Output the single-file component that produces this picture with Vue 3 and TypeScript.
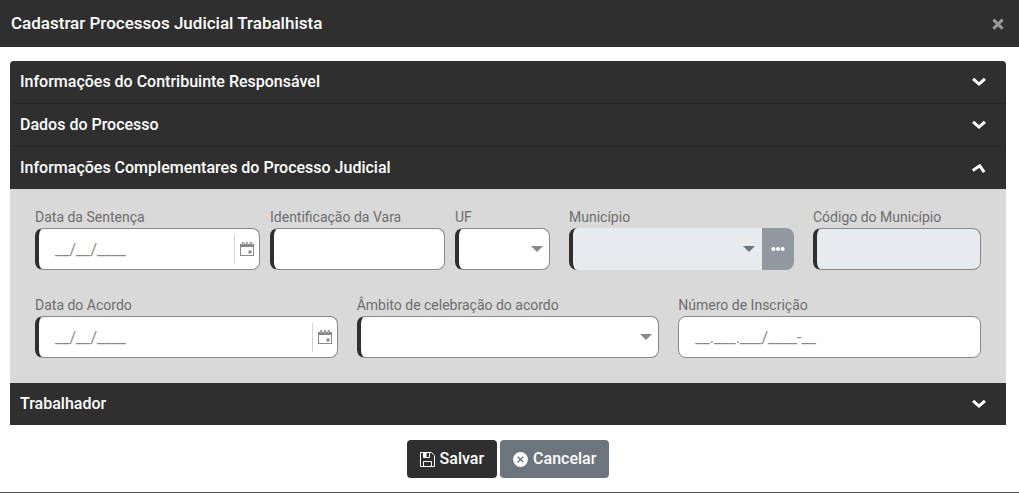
<script setup lang="ts">
import { reactive, ref } from 'vue'

type SectionKey = 'contribuinte' | 'processo' | 'complementares' | 'trabalhador'

interface Section {
  key: SectionKey
  title: string
}

const sections: Section[] = [
  { key: 'contribuinte', title: 'Informações do Contribuinte Responsável' },
  { key: 'processo', title: 'Dados do Processo' },
  { key: 'complementares', title: 'Informações Complementares do Processo Judicial' },
  { key: 'trabalhador', title: 'Trabalhador' },
]

const openSection = ref<SectionKey | null>('complementares')

const form = reactive({
  dataSentenca: '',
  vara: '',
  uf: '',
  municipio: '',
  codigoMunicipio: '',
  dataAcordo: '',
  ambito: '',
  inscricao: '',
})

function toggle(key: SectionKey): void {
  openSection.value = openSection.value === key ? null : key
}
</script>

<template>
  <form class="dialog" @submit.prevent>
    <header class="dialog-header">
      <h1>Cadastrar Processos Judicial Trabalhista</h1>
      <button class="close" type="button" aria-label="Fechar">
        <svg viewBox="0 0 12 12" width="12" height="12" aria-hidden="true">
          <path d="M1.4 1.6 10.6 10.8M10.6 1.6 1.4 10.8" />
        </svg>
      </button>
    </header>

    <main class="accordion">
      <section v-for="section in sections" :key="section.key" class="section">
        <h2>
          <button
            class="section-toggle"
            type="button"
            :aria-expanded="openSection === section.key"
            @click="toggle(section.key)"
          >
            <span>{{ section.title }}</span>
            <svg v-if="openSection === section.key" viewBox="0 0 16 16" width="16" height="16" aria-hidden="true">
              <path d="M1.8 10.6 8.7 5.8 13.2 12.2" />
            </svg>
            <svg v-else viewBox="0 0 16 16" width="16" height="16" aria-hidden="true">
              <path d="M2.1 4.8 8 10.1 13.9 4.8" />
            </svg>
          </button>
        </h2>

        <div v-if="section.key === 'complementares' && openSection === section.key" class="panel">
          <div class="row row-court">
            <div class="group">
              <div class="field">
                <label for="data-sentenca">Data da Sentença</label>
                <div class="control required">
                  <input id="data-sentenca" v-model="form.dataSentenca" type="text" placeholder="__/__/____" />
                  <button class="calendar" type="button" aria-label="Abrir calendário">
                    <svg viewBox="0 0 14 14" width="14" height="14" aria-hidden="true">
                      <path class="fill" d="M0 2H2V1Q2 0 3.2 0T4.4 1V2H5.8V1Q5.8 0 7 0T8.2 1V2H9.6V1Q9.6 0 10.8 0T12 1V2H14V14H0ZM1 5V13H13V5Z" fill-rule="evenodd" />
                      <path class="hole" d="M2.8 1.2H3.6V2.4H2.8ZM6.6 1.2H7.4V2.4H6.6ZM10.4 1.2H11.2V2.4H10.4Z" />
                      <path class="fill" d="M8.5 8.5H11.5V11.5H8.5Z" />
                    </svg>
                  </button>
                </div>
              </div>
              <div class="field">
                <label for="vara">Identificação da Vara</label>
                <div class="control required">
                  <input id="vara" v-model="form.vara" type="text" />
                </div>
              </div>
              <div class="field">
                <label for="uf">UF</label>
                <div class="control required">
                  <select id="uf" v-model="form.uf">
                    <option value=""></option>
                    <option>PR</option>
                    <option>RJ</option>
                    <option>SP</option>
                  </select>
                  <svg class="arrow" viewBox="0 0 12 6" width="12" height="6" aria-hidden="true">
                    <path d="M0 0H12L6 6Z" />
                  </svg>
                </div>
              </div>
            </div>
            <div class="field">
              <label for="municipio">Município</label>
              <div class="control required disabled joined">
                <select id="municipio" v-model="form.municipio" disabled>
                  <option value=""></option>
                </select>
                <svg class="arrow" viewBox="0 0 12 6" width="12" height="6" aria-hidden="true">
                  <path d="M0 0H12L6 6Z" />
                </svg>
                <button class="more" type="button" aria-label="Pesquisar município" disabled>
                  <svg viewBox="0 0 14 4" width="14" height="4" aria-hidden="true">
                    <circle cx="2.4" cy="2" r="2" />
                    <circle cx="7" cy="2" r="2" />
                    <circle cx="11.6" cy="2" r="2" />
                  </svg>
                </button>
              </div>
            </div>
            <div class="field">
              <label for="codigo">Código do Município</label>
              <div class="control required disabled">
                <input id="codigo" v-model="form.codigoMunicipio" type="text" disabled />
              </div>
            </div>
          </div>

          <div class="row row-agreement">
            <div class="field">
              <label for="data-acordo">Data do Acordo</label>
              <div class="control required">
                <input id="data-acordo" v-model="form.dataAcordo" type="text" placeholder="__/__/____" />
                <button class="calendar" type="button" aria-label="Abrir calendário">
                  <svg viewBox="0 0 14 14" width="14" height="14" aria-hidden="true">
                    <path class="fill" d="M0 2H2V1Q2 0 3.2 0T4.4 1V2H5.8V1Q5.8 0 7 0T8.2 1V2H9.6V1Q9.6 0 10.8 0T12 1V2H14V14H0ZM1 5V13H13V5Z" fill-rule="evenodd" />
                    <path class="hole" d="M2.8 1.2H3.6V2.4H2.8ZM6.6 1.2H7.4V2.4H6.6ZM10.4 1.2H11.2V2.4H10.4Z" />
                    <path class="fill" d="M8.5 8.5H11.5V11.5H8.5Z" />
                  </svg>
                </button>
              </div>
            </div>
            <div class="field">
              <label for="ambito">Âmbito de celebração do acordo</label>
              <div class="control required">
                <select id="ambito" v-model="form.ambito">
                  <option value=""></option>
                </select>
                <svg class="arrow" viewBox="0 0 12 6" width="12" height="6" aria-hidden="true">
                  <path d="M0 0H12L6 6Z" />
                </svg>
              </div>
            </div>
            <div class="field">
              <label for="inscricao">Número de Inscrição</label>
              <div class="control">
                <input id="inscricao" v-model="form.inscricao" type="text" placeholder="__.___.___/____-__" />
              </div>
            </div>
          </div>
        </div>
      </section>
    </main>

    <footer class="actions">
      <button class="action save" type="submit">
        <svg viewBox="0 0 15 15" width="15" height="15" aria-hidden="true">
          <path d="M.5 .5H11.5L14.5 3.5V14.5H.5ZM3.5 .5V5.5H9.5V.5M3.5 14.5V9.5H11.5V14.5" />
          <path class="shutter" d="M3.5 1H6.6V5.5H3.5Z" />
        </svg>
        <span>Salvar</span>
      </button>
      <button class="action cancel" type="button">
        <svg viewBox="0 0 15 15" width="15" height="15" aria-hidden="true">
          <circle cx="7.5" cy="7.5" r="7.4" />
          <path d="M4.7 4.7 10.3 10.3M10.3 4.7 4.7 10.3" />
        </svg>
        <span>Cancelar</span>
      </button>
    </footer>
  </form>
</template>

<style>
body {
  background: #fff;
}
</style>

<style scoped>
* {
  box-sizing: border-box;
}

.dialog {
  display: flex;
  flex-direction: column;
  min-height: 100vh;
  border-bottom: 1px solid #4d4d4d;
  background: #fff;
  font-family: Roboto, 'Liberation Sans', sans-serif;
  font-size: 16px;
}

button,
input,
select {
  margin: 0;
  padding: 0;
  border: 0;
  background: none;
  color: inherit;
  font: inherit;
}

button {
  cursor: pointer;
}

.dialog-header {
  display: flex;
  align-items: center;
  justify-content: space-between;
  padding: 12px 15px 12px 11px;
  background: #2f2f2f;
  color: #fff;
}

h1 {
  margin: 0;
  font-size: 17px;
  font-weight: 500;
  line-height: 23px;
}

.close {
  display: flex;
}

.close svg {
  fill: none;
  stroke: #999;
  stroke-width: 3;
}

.accordion {
  margin: 14px 13px 0 10px;
  overflow: hidden;
  border-radius: 4px 4px 0 0;
}

.section + .section h2 {
  border-top: 1px solid #272727;
}

.section:last-child h2 {
  border-top: 0;
}

h2 {
  margin: 0;
  font-size: 16px;
  font-weight: 500;
  line-height: 22px;
}

.section-toggle {
  display: flex;
  align-items: center;
  justify-content: space-between;
  width: 100%;
  padding: 10px 19px 10px 10px;
  background: #2f2f2f;
  color: #fff;
  text-align: left;
}

.section-toggle svg {
  fill: none;
  stroke: #fff;
  stroke-width: 3;
}

.panel {
  display: grid;
  gap: 25px;
  padding: 18px 25px 25px;
  background: #d9d9d9;
}

.row {
  display: grid;
  gap: 19px;
}

.row-court {
  grid-template-columns: minmax(0, 515fr) minmax(0, 225fr) minmax(0, 168fr);
}

.row-agreement {
  grid-template-columns: repeat(3, minmax(0, 1fr));
}

.group {
  display: grid;
  grid-template-columns: minmax(0, 225fr) minmax(0, 175fr) minmax(0, 95fr);
  gap: 10px;
}

.field {
  display: flex;
  flex-direction: column;
  gap: 1px;
}

label {
  color: #6e6e6e;
  font-size: 14px;
  line-height: 20px;
  white-space: nowrap;
}

.control {
  position: relative;
  display: flex;
  align-items: center;
  height: 42px;
  overflow: hidden;
  border: 1px solid #888;
  border-radius: 8px;
  background: #fff;
}

.required {
  border-left: 4px solid #2f2f2f;
}

.disabled {
  background: #e8ebee;
}

.joined {
  border-width: 0 0 0 4px;
}

input,
select {
  flex: 1;
  min-width: 0;
  height: 100%;
  padding: 0 16px;
  outline: 0;
  appearance: none;
  color: #555;
}

input::placeholder {
  color: #888;
  opacity: 1;
}

.calendar {
  display: flex;
  align-items: center;
  height: 29px;
  padding: 0 5px;
  border-left: 1px solid #ced4da;
}

.calendar .fill {
  fill: #888;
}

.calendar .hole {
  fill: #fff;
}

.arrow {
  position: absolute;
  right: 6px;
  fill: #888;
  pointer-events: none;
}

.joined .arrow {
  right: 39px;
  fill: #6c757d;
}

.more {
  display: flex;
  align-items: center;
  justify-content: center;
  width: 32px;
  height: 100%;
  background: #9298a0;
}

.more svg {
  fill: #fff;
}

.actions {
  display: flex;
  justify-content: center;
  gap: 3px;
  padding: 15px 3px 14px 0;
}

.action {
  display: flex;
  align-items: center;
  gap: 5px;
  padding: 8px 13px;
  border-radius: 4px;
  color: #fff;
  font-weight: 500;
  line-height: 22px;
}

.save {
  background: #2f2f2f;
}

.cancel {
  background: #6c757d;
}

.save svg {
  fill: none;
  stroke: #fff;
  stroke-width: 1;
}

.save .shutter {
  fill: #fff;
  stroke: none;
}

.cancel svg {
  fill: #fff;
  stroke: #6c757d;
  stroke-width: 1.4;
}

.cancel circle {
  stroke: none;
}
</style>
